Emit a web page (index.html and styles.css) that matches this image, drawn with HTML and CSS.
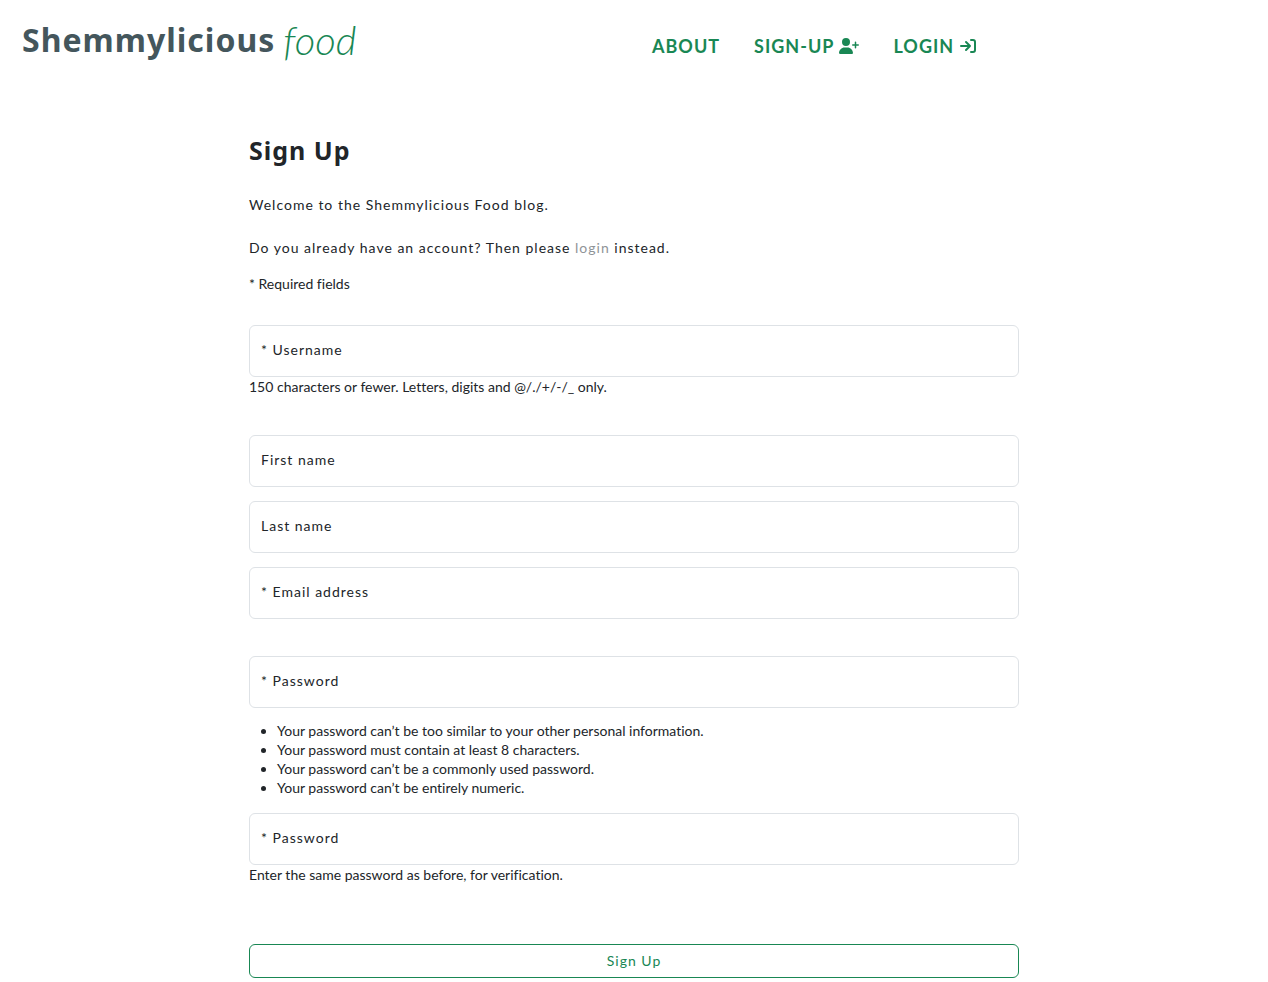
FILE: index.html
```html
<!DOCTYPE html>
<html lang="en">
<head>
<meta charset="utf-8">
<meta name="viewport" content="width=device-width, initial-scale=1">
<title>Sign Up</title>
<link rel="stylesheet" href="styles.css">
</head>
<body>
<header class="site-header">
  <a class="brand" href="#"><span class="brand-name">Shemmylicious</span><span class="brand-script">food</span></a>
  <nav class="site-nav" aria-label="Main">
    <a class="nav-link" href="#">ABOUT</a>
    <a class="nav-link" href="#">SIGN-UP
      <svg class="icon-user" viewBox="0 0 640 512" aria-hidden="true"><path d="M96 128a128 128 0 1 1 256 0A128 128 0 1 1 96 128zM0 482.300C0 383.800 79.800 304 178.300 304h91.400C368.200 304 448 383.800 448 482.300c0 16.400-13.300 29.700-29.700 29.700H29.700C13.300 512 0 498.700 0 482.300zM504 312v-64h-64c-13.300 0-24-10.700-24-24s10.700-24 24-24h64v-64c0-13.300 10.700-24 24-24s24 10.700 24 24v64h64c13.300 0 24 10.700 24 24s-10.700 24-24 24h-64v64c0 13.300-10.700 24-24 24s-24-10.700-24-24z"/></svg></a>
    <a class="nav-link" href="#">LOGIN
      <svg class="icon-login" viewBox="0 0 16 16" aria-hidden="true"><path d="M1 8h9M6 4l4 4-4 4M11 2h2q2 0 2 2v8q0 2-2 2h-2"/></svg></a>
  </nav>
</header>
<main class="page">
  <h1 class="title">Sign Up</h1>
  <p class="welcome">Welcome to the Shemmylicious Food blog.</p>
  <p class="account">Do you already have an account? Then please <a class="login-link" href="#">login</a> instead.</p>
  <p class="small required">* Required fields</p>
  <form class="signup">
    <div class="group group-wide">
      <div class="field"><input class="control" id="username" type="text"><label class="label" for="username">* Username</label></div>
      <p class="small">150 characters or fewer. Letters, digits and @/./+/-/_ only.</p>
    </div>
    <div class="group">
      <div class="field"><input class="control" id="first" type="text"><label class="label" for="first">First name</label></div>
    </div>
    <div class="group">
      <div class="field"><input class="control" id="last" type="text"><label class="label" for="last">Last name</label></div>
    </div>
    <div class="group group-wide">
      <div class="field"><input class="control" id="email" type="email"><label class="label" for="email">* Email address</label></div>
    </div>
    <div class="group">
      <div class="field"><input class="control" id="pass1" type="password"><label class="label" for="pass1">* Password</label></div>
      <ul class="small rules">
        <li>Your password can’t be too similar to your other personal information.</li>
        <li>Your password must contain at least 8 characters.</li>
        <li>Your password can’t be a commonly used password.</li>
        <li>Your password can’t be entirely numeric.</li>
      </ul>
    </div>
    <div class="group group-last">
      <div class="field"><input class="control" id="pass2" type="password"><label class="label" for="pass2">* Password</label></div>
      <p class="small">Enter the same password as before, for verification.</p>
    </div>
    <button class="submit" type="submit">Sign Up</button>
  </form>
</main>
</body>
</html>
```
FILE: styles.css
```css
* { box-sizing: border-box; }

body {
  margin: 0;
  background: #fff;
  color: #212529;
  font: 14px/21px Lato, "Open Sans", sans-serif;
  letter-spacing: 1px;
}

p, h1, ul { margin: 0; }
a { text-decoration: none; }

.site-header {
  display: grid;
  grid-template-columns: 1fr 1fr;
  align-items: center;
  height: 92px;
  padding: 0 22px;
}

.brand {
  display: flex;
  align-items: center;
  gap: 8px;
  padding-bottom: 12px;
  color: #44565c;
}

.brand-name { font: 700 32px/48px "Noto Sans", sans-serif; }

.brand-script {
  color: #198754;
  font: italic 300 40px/48px Lato, cursive;
  letter-spacing: 0;
}

.site-nav {
  display: flex;
  gap: 34px;
  padding-left: 18px;
}

.nav-link {
  display: flex;
  align-items: center;
  gap: 5px;
  color: #198754;
  font: 700 18px/24px Lato, sans-serif;
}

.icon-user { width: 20px; height: 16px; fill: #198754; }

.icon-login {
  width: 18px;
  height: 16px;
  fill: none;
  stroke: #198754;
  stroke-width: 2;
  stroke-linecap: round;
  stroke-linejoin: round;
}

.page {
  max-width: 802px;
  margin: 0 auto;
  padding: 42px 16px 4px;
}

.title { margin-bottom: 28px; font: 700 25px/32px "Noto Sans", sans-serif; }
.welcome { margin-bottom: 22px; }
.account { margin-bottom: 16px; }
.login-link { color: #8f9498; }

.small {
  line-height: 20px;
  letter-spacing: 0;
  font-variant-ligatures: none;
}

.required { margin-bottom: 31px; }

.group { margin-bottom: 14px; }
.group-wide { margin-bottom: 37px; }
.group-last { margin-bottom: 59px; }

.group-wide .small { padding-bottom: 1px; }

.field { display: grid; }

.control,
.label { grid-area: 1 / 1; }

.control {
  width: 100%;
  height: 52px;
  padding: 12px;
  border: 1px solid #dee2e6;
  border-radius: 6px;
  background: #fff;
  font: inherit;
}

.label {
  align-self: center;
  justify-self: start;
  padding: 0 0 3px 12px;
}

.rules {
  padding: 13px 0 2px 28px;
  line-height: 19px;
}

.submit {
  width: 100%;
  height: 34px;
  padding: 3px 12px 5px;
  border: 1px solid #198754;
  border-radius: 6px;
  background: #fff;
  color: #198754;
  font: inherit;
  letter-spacing: inherit;
}
```
